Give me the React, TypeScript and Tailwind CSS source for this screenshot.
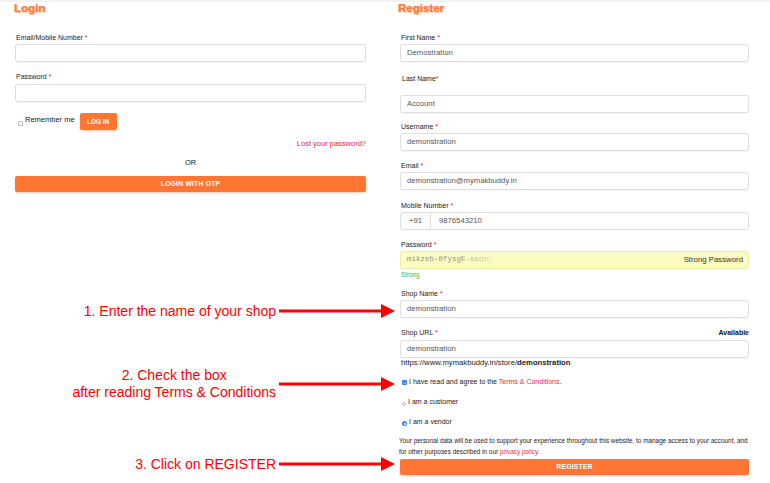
import type { ReactNode } from 'react'

const ORANGE = 'bg-[#ff7633]'

function Label({ children, req = true, className = '' }: { children: ReactNode; req?: boolean; className?: string }) {
  return (
    <div className={`text-[7px] leading-[10px] text-[#222] font-medium pl-[1px] ${className}`}>
      {children}
      {req && <span className="text-[#e0122f]"> *</span>}
    </div>
  )
}

function Input({ value = '', className = '' }: { value?: string; className?: string }) {
  return (
    <div
      className={`h-[18px] w-full rounded-[3px] border border-[#dedede] bg-white shadow-[0_1px_1px_rgba(0,0,0,0.04)] flex items-center pl-[6px] text-[7.7px] text-[#555] ${className}`}
    >
      {value}
    </div>
  )
}

function Arrow() {
  return (
    <svg width="116" height="16" viewBox="0 0 116 16" className="shrink-0">
      <rect x="0" y="6.5" width="104" height="3" fill="#fe0000" />
      <polygon points="102,1 116,8 102,15" fill="#fe0000" />
    </svg>
  )
}

export default function App() {
  return (
    <div className="w-[770px] h-[483px] bg-white overflow-hidden font-['Liberation_Sans',Arial,sans-serif]">
      <div className="h-[2px] bg-[#f3f3f3]" />
      <div className="flex">
        {/* left column: login + notes */}
        <div className="w-[395px] shrink-0">
          <div className="ml-[15px] w-[351px]">
            <h2 className="text-[11.5px] leading-[13px] font-bold text-[#ff7a38] -ml-[1px] [text-shadow:0_0_1px_rgba(255,122,56,0.6),1px_1px_1px_rgba(255,150,90,0.5)]">
              Login
            </h2>
            <Label className="mt-[18px]">Email/Mobile Number</Label>
            <Input className="mt-[1px]" />
            <Label className="mt-[10px]">Password</Label>
            <Input className="mt-[2px]" />
            <div className="mt-[11px] h-[17px] flex items-center">
              <span className="ml-[3px] mt-[3px] w-[5px] h-[5px] border border-[#bbb] rounded-[1px] bg-white" />
              <span className="ml-[2px] -mt-[3px] text-[7.5px] text-[#222]">Remember me</span>
              <button className={`ml-[5px] h-[17px] w-[37px] rounded-[2px] ${ORANGE} text-white text-[6.5px] font-bold shadow-[0_1px_2px_rgba(255,118,51,0.4)]`}>
                LOG IN
              </button>
            </div>
            <div className="mt-[9px] leading-[10px] text-right text-[7.5px] text-[#e8194d]">Lost your password?</div>
            <div className="mt-[9px] leading-[10px] text-center text-[7.5px] text-[#222]">OR</div>
            <button className={`block mt-[8px] h-[16px] w-full rounded-[2px] ${ORANGE} text-white text-[6.8px] font-bold tracking-[0.2px] shadow-[0_1px_2px_rgba(255,118,51,0.4)]`}>
              LOGIN WITH OTP
            </button>
          </div>

          <div className="text-[#fe0000] text-[14px]">
            <div className="mt-[109px] h-[20px] flex items-center justify-end">
              <span>1. Enter the name of your shop</span>
              <span className="ml-[3px]"><Arrow /></span>
            </div>
            <div className="mt-[46px] flex items-center justify-end">
              <span className="text-center leading-[16.6px]">
                2. Check the box
                <br />
                after reading Terms &amp; Conditions
              </span>
              <span className="ml-[3px]"><Arrow /></span>
            </div>
            <div className="mt-[54px] h-[20px] flex items-center justify-end">
              <span>3. Click on REGISTER</span>
              <span className="ml-[3px]"><Arrow /></span>
            </div>
          </div>
        </div>

        {/* right column: register */}
        <div className="w-[354px] pl-[5px] shrink-0">
          <h2 className="text-[11.5px] leading-[13px] font-bold text-[#ff7a38] -ml-[2px] [text-shadow:0_0_1px_rgba(255,122,56,0.6),1px_1px_1px_rgba(255,150,90,0.5)]">
            Register
          </h2>
          <Label className="mt-[18px]">First Name</Label>
          <Input className="mt-[1px]" value="Demostration" />
          <div className="mt-[12px] text-[7px] leading-[10px] text-[#222] font-medium pl-[2px]">
            Last Name<span className="text-[#e0122f]">*</span>
          </div>
          <Input className="mt-[11px]" value="Account" />
          <Label className="mt-[9px]">Username</Label>
          <Input className="mt-[1px]" value="demonstration" />
          <Label className="mt-[10px]">Email</Label>
          <Input className="mt-[1px]" value="demonstration@mymakbuddy.in" />
          <Label className="mt-[11px]">Mobile Number</Label>
          <div className="mt-[1px] h-[18px] w-full rounded-[3px] border border-[#dedede] bg-white flex items-center text-[7.7px] text-[#555]">
            <div className="h-full w-[30px] border-r border-[#dedede] bg-[#fafafa] flex items-center justify-center rounded-l-[3px]">+91</div>
            <span className="ml-[8px]">9876543210</span>
          </div>
          <Label className="mt-[10px]">Password</Label>
          <div className="mt-[1px] h-[18px] w-full rounded-[3px] border border-[#e8eaa8] bg-[#fbfcc0] flex items-center justify-between pl-[6px] pr-[5px]">
            <span className="font-['Liberation_Mono',monospace] text-[7.5px] bg-gradient-to-r from-[#888] from-60% to-[#e4e6b0] bg-clip-text text-transparent">
              mikzeb-0fysgE-seqmy
            </span>
            <span className="text-[7.8px] text-[#333]">Strong Password</span>
          </div>
          <div className="mt-[1px] h-[10px] leading-[10px] text-[6.3px] text-[#33bb33] pl-[1px]">Strong</div>
          <Label className="mt-[9px]">Shop Name</Label>
          <Input className="mt-[1px]" value="demonstration" />
          <div className="mt-[10px] flex justify-between items-center">
            <Label>Shop URL</Label>
            <span className="text-[7px] leading-[10px] font-bold text-[#111]">Available</span>
          </div>
          <Input className="mt-[2px]" value="demonstration" />
          <div className="leading-[10px] text-[7.7px] text-[#222] pl-[1px]">
            https://www.mymakbuddy.in/store/<span className="font-bold">demonstration</span>
          </div>
          <div className="mt-[9px] h-[10px] flex items-center text-[7px] text-[#222]">
            <span className="ml-[2px] mt-[1px] w-[5px] h-[5px] rounded-[1px] bg-[#3b82f6] flex items-center justify-center">
              <svg width="4" height="4" viewBox="0 0 4 4"><path d="M0.7 2.1 L1.6 3 L3.3 1" stroke="white" strokeWidth="0.7" fill="none" /></svg>
            </span>
            <span className="ml-[2px]">
              I have read and agree to the <span className="text-[#f2263f]">Terms &amp; Conditions</span>.
            </span>
          </div>
          <div className="mt-[10px] h-[10px] flex items-center text-[7px] text-[#222]">
            <span className="ml-[2px] mt-[3px] w-[4px] h-[4px] rounded-full border border-[#bbb] bg-white" />
            <span className="ml-[2px]">I am a customer</span>
          </div>
          <div className="mt-[10px] h-[10px] flex items-center text-[7px] text-[#222]">
            <span className="ml-[2px] mt-[3px] w-[5px] h-[5px] rounded-full bg-[#3b82f6] flex items-center justify-center">
              <span className="w-[2px] h-[2px] rounded-full bg-white" />
            </span>
            <span className="ml-[2px]">I am a vendor</span>
          </div>
          <div className="mt-[9px] h-[21px] text-[6.4px] leading-[10.5px] text-[#222] -ml-[1px]">
            <div className="h-[10.5px] whitespace-nowrap">
              Your personal data will be used to support your experience throughout this website, to manage access to your account, and
            </div>
            <div className="h-[10.5px] whitespace-nowrap">
              for other purposes described in our <span className="text-[#f2263f]">privacy policy</span>.
            </div>
          </div>
          <button className={`block mt-[2px] h-[16px] w-full rounded-[2px] ${ORANGE} text-white text-[6.8px] font-bold tracking-[0.2px] shadow-[0_1px_2px_rgba(255,118,51,0.4)]`}>
            REGISTER
          </button>
        </div>
      </div>
    </div>
  )
}
